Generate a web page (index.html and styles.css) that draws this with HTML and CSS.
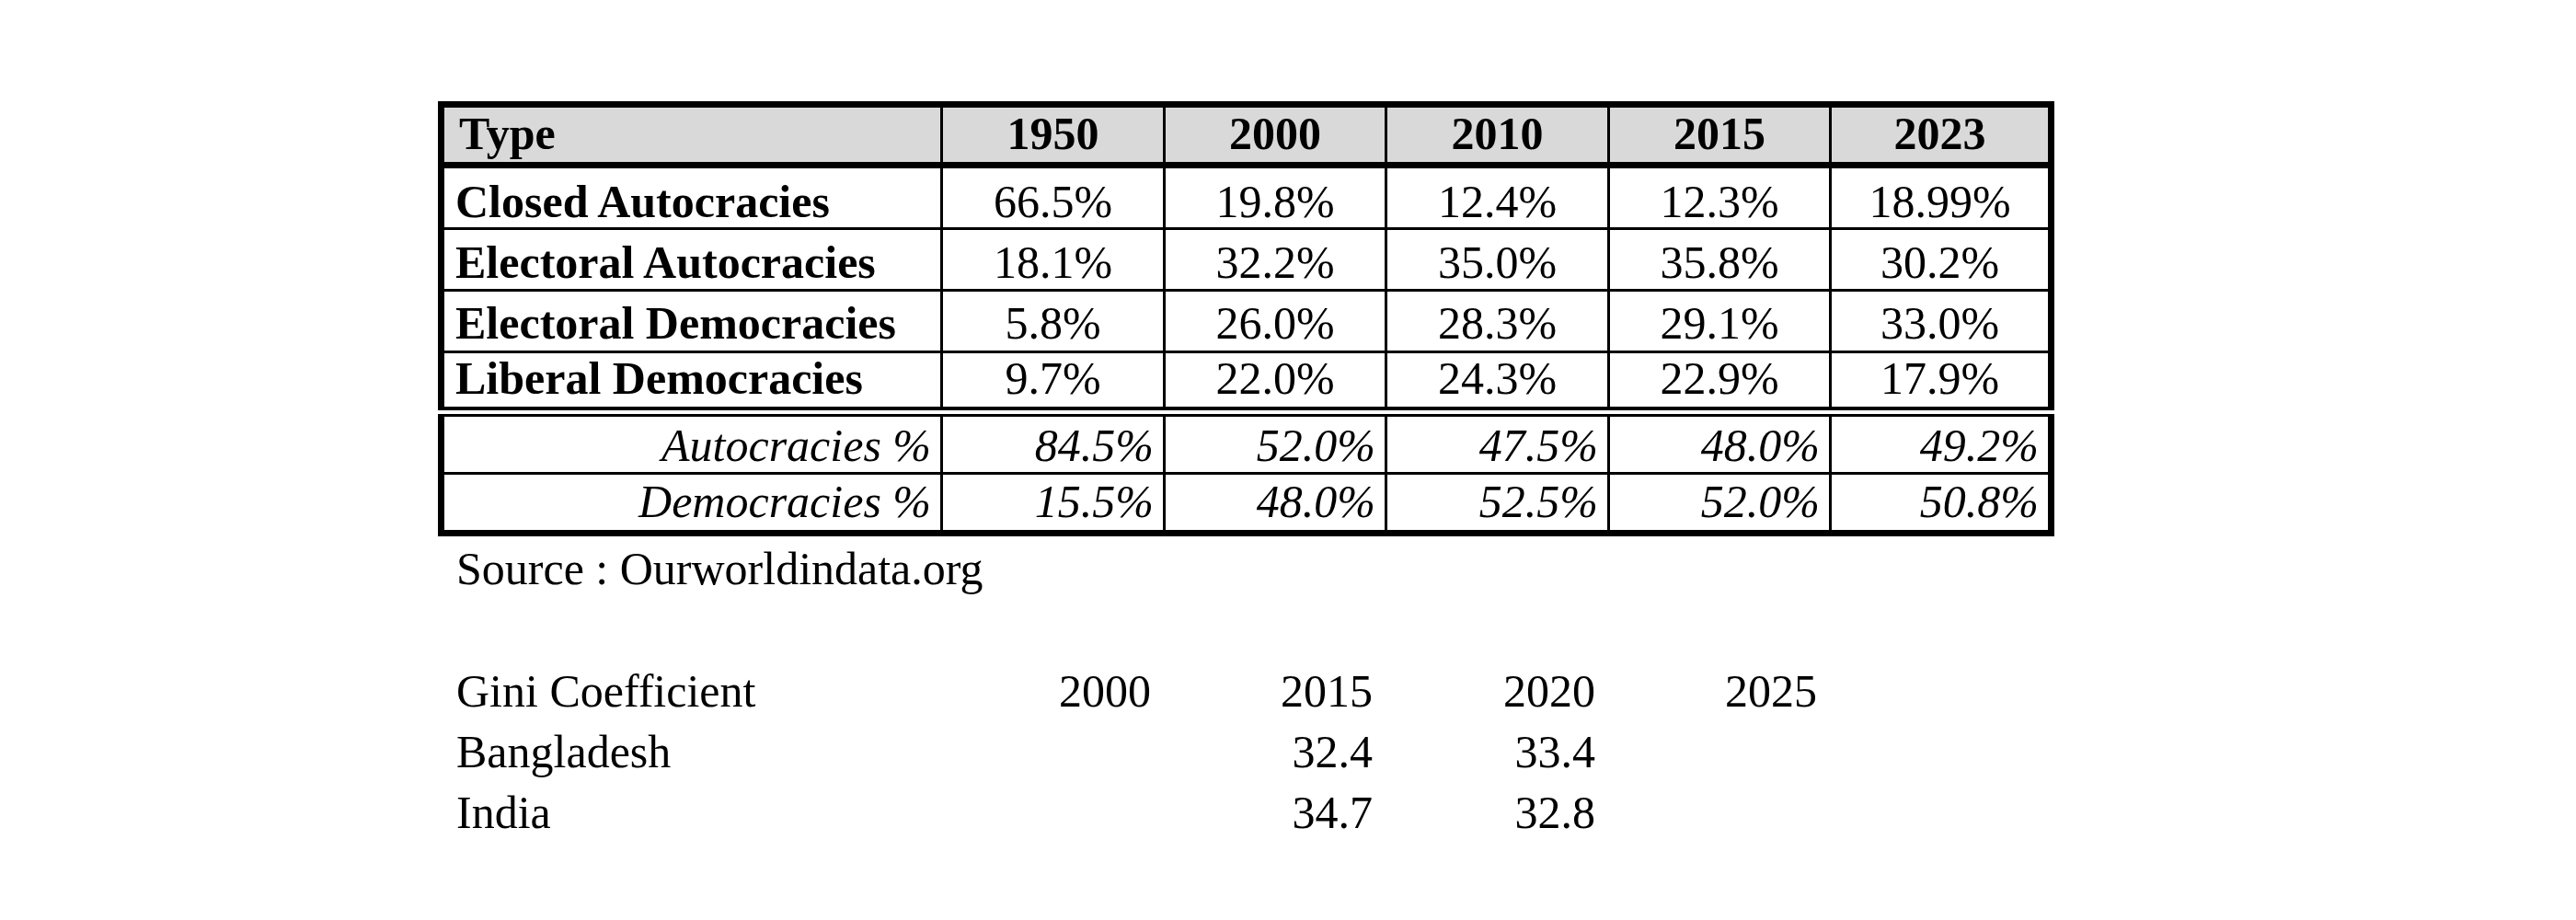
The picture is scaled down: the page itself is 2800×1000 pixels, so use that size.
FILE: index.html
```html
<!DOCTYPE html>
<html lang="en">
<head>
<meta charset="utf-8">
<title>Regime types</title>
<link rel="stylesheet" href="styles.css">
</head>
<body>
<div class="page">
  <div class="sheet sheet-main">
    <div class="cell head left">Type</div>
    <div class="cell head">1950</div>
    <div class="cell head">2000</div>
    <div class="cell head">2010</div>
    <div class="cell head">2015</div>
    <div class="cell head last">2023</div>

    <div class="cell r1 label">Closed Autocracies</div>
    <div class="cell r1">66.5%</div>
    <div class="cell r1">19.8%</div>
    <div class="cell r1">12.4%</div>
    <div class="cell r1">12.3%</div>
    <div class="cell r1 last">18.99%</div>

    <div class="cell r2 label">Electoral Autocracies</div>
    <div class="cell r2">18.1%</div>
    <div class="cell r2">32.2%</div>
    <div class="cell r2">35.0%</div>
    <div class="cell r2">35.8%</div>
    <div class="cell r2 last">30.2%</div>

    <div class="cell r3 label">Electoral Democracies</div>
    <div class="cell r3">5.8%</div>
    <div class="cell r3">26.0%</div>
    <div class="cell r3">28.3%</div>
    <div class="cell r3">29.1%</div>
    <div class="cell r3 last">33.0%</div>

    <div class="cell r4 label">Liberal Democracies</div>
    <div class="cell r4">9.7%</div>
    <div class="cell r4">22.0%</div>
    <div class="cell r4">24.3%</div>
    <div class="cell r4">22.9%</div>
    <div class="cell r4 last">17.9%</div>
  </div>

  <div class="sheet sheet-sum">
    <div class="cell s1 sum">Autocracies %</div>
    <div class="cell s1 sum">84.5%</div>
    <div class="cell s1 sum">52.0%</div>
    <div class="cell s1 sum">47.5%</div>
    <div class="cell s1 sum">48.0%</div>
    <div class="cell s1 sum last">49.2%</div>

    <div class="cell s2 sum">Democracies %</div>
    <div class="cell s2 sum">15.5%</div>
    <div class="cell s2 sum">48.0%</div>
    <div class="cell s2 sum">52.5%</div>
    <div class="cell s2 sum">52.0%</div>
    <div class="cell s2 sum last">50.8%</div>
  </div>

  <div class="source">Source : Ourworldindata.org</div>
  <div class="blank"></div>

  <div class="gini">
    <div class="g-label">Gini Coefficient</div>
    <div class="g-num">2000</div>
    <div class="g-num">2015</div>
    <div class="g-num">2020</div>
    <div class="g-num">2025</div>

    <div class="g-label">Bangladesh</div>
    <div class="g-num"></div>
    <div class="g-num">32.4</div>
    <div class="g-num">33.4</div>
    <div class="g-num"></div>

    <div class="g-label">India</div>
    <div class="g-num"></div>
    <div class="g-num">34.7</div>
    <div class="g-num">32.8</div>
    <div class="g-num"></div>
  </div>
</div>
</body>
</html>
```

FILE: styles.css
```css
* {
  box-sizing: border-box;
}

html, body {
  margin: 0;
  padding: 0;
  background: #ffffff;
}

body {
  font-family: "Liberation Serif", "Times New Roman", serif;
  font-size: 50px;
  color: #000000;
}

.page {
  padding: 110px 0 0 476px;
  width: 2800px;
}

.sheet {
  display: grid;
  grid-template-columns: 542px 242px 241px 242px 241px 235px;
  width: 1757px;
  border: 7px solid #000000;
}

.sheet-main {
  border-bottom-width: 4px;
  grid-template-rows: 66px 67px 67px 67px 58px;
}

.sheet-sum {
  margin-top: 4px;
  border-top-width: 3px;
  grid-template-rows: 63px 60px;
}

.cell {
  display: flex;
  align-items: flex-end;
  justify-content: center;
  line-height: 50px;
  white-space: nowrap;
  padding: 0 0 4px 0;
  border-right: 3px solid #000000;
  border-bottom: 3px solid #000000;
}

.cell.last {
  border-right: none;
}

.head {
  background: #d9d9d9;
  font-weight: bold;
  border-bottom: 7px solid #000000;
  padding-bottom: 6px;
}

.head.left {
  justify-content: flex-start;
  padding-left: 16px;
}

.label {
  justify-content: flex-start;
  padding-left: 12px;
  font-weight: bold;
}

.r1 { padding-bottom: 3px; }
.r2 { padding-bottom: 4px; }
.r3 { padding-bottom: 5px; }
.r4 {
  padding-bottom: 6px;
  border-bottom: none;
}

.sum {
  font-style: italic;
  justify-content: flex-end;
  padding-right: 10px;
}

.s1 { padding-bottom: 4px; }
.s2 {
  padding-bottom: 6px;
  border-bottom: none;
}

.source {
  height: 64px;
  display: flex;
  align-items: flex-end;
  line-height: 50px;
  padding: 0 0 4px 20px;
  white-space: nowrap;
}

.blank {
  height: 66px;
}

.gini {
  display: grid;
  grid-template-columns: 549px 242px 241px 242px 241px;
  grid-template-rows: 67px 66px 66px;
}

.g-label,
.g-num {
  display: flex;
  align-items: flex-end;
  line-height: 50px;
  padding-bottom: 4px;
  white-space: nowrap;
}

.g-label {
  padding-left: 20px;
}

.g-num {
  justify-content: flex-end;
  padding-right: 16px;
}
```
